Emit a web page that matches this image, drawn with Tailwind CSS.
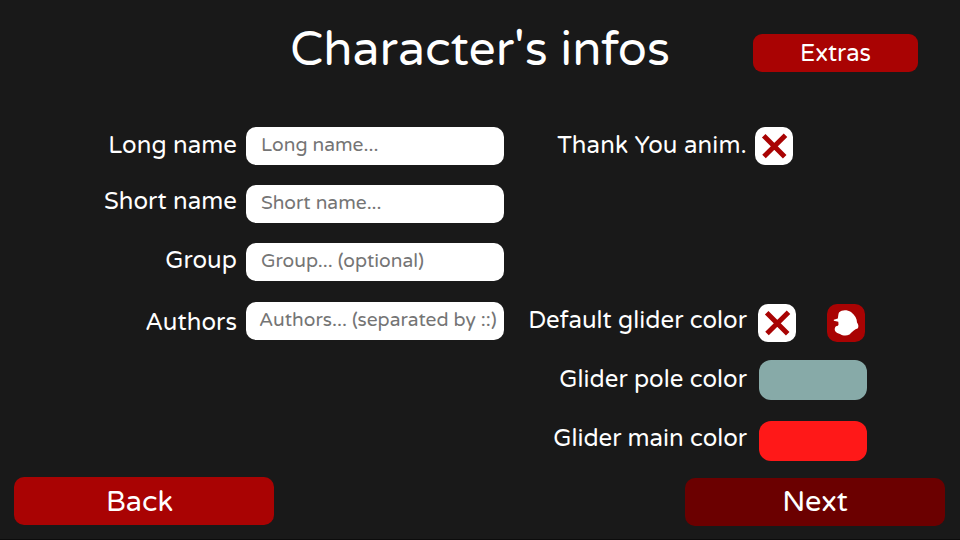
<!DOCTYPE html>
<html lang="en">
<head>
<meta charset="utf-8">
<title>Character's infos</title>
<script src="https://cdn.jsdelivr.net/npm/@tailwindcss/browser@4"></script>
</head>
<body class="bg-[#191919]">
<div class="w-[960px] h-[540px] overflow-hidden flex flex-col bg-[#191919] border-b border-[#0c0c0c] text-white text-[24px] font-['Varela_Round','Noto_Sans',sans-serif] whitespace-nowrap">
  <header class="h-[127px] shrink-0 flex pl-[290px] pt-[19px]">
    <h1 class="w-[463px] text-[48px] leading-[62px]">Character's infos</h1>
    <button class="mt-[15px] w-[165px] h-[38px] rounded-[9px] bg-[#a90303] pt-px text-[23.8px] leading-[38px]">Extras</button>
  </header>
  <main class="h-[350px] shrink-0 flex">
    <section class="w-[504px] flex flex-col gap-5">
      <label class="h-[38px] flex gap-[9px]"><span class="w-[237px] text-right leading-[38px] tracking-[0.08px]">Long name</span>
        <input placeholder="Long name..." class="w-[258px] h-[38px] rounded-[10px] bg-white pl-[15px] pb-[4px] text-[19.2px] placeholder:text-[#757575]"></label>
      <label class="h-[38px] flex gap-[9px]"><span class="w-[237px] text-right leading-[34px] tracking-[0.08px]">Short name</span>
        <input placeholder="Short name..." class="w-[258px] h-[38px] rounded-[10px] bg-white pl-[15px] pb-[4px] text-[19.2px] placeholder:text-[#757575]"></label>
      <label class="h-[38px] flex gap-[9px]"><span class="w-[237px] text-right leading-[36px] tracking-[0.08px]">Group</span>
        <input placeholder="Group... (optional)" class="w-[258px] h-[38px] rounded-[10px] bg-white pl-[15px] pb-[4px] text-[19.2px] placeholder:text-[#757575]"></label>
      <label class="mt-px h-[38px] flex gap-[9px]"><span class="w-[237px] text-right leading-[42px] tracking-[0.08px]">Authors</span>
        <input placeholder="Authors... (separated by ::)" class="w-[258px] h-[38px] rounded-[10px] bg-white pl-[13px] pb-[4px] text-[19.2px] placeholder:text-[#757575]"></label>
    </section>
    <section class="flex flex-col">
      <div class="h-[177px] flex gap-2"><span class="w-[243px] text-right leading-[38px] tracking-[0.13px]">Thank You anim.</span>
        <button class="size-[38px] rounded-[10px] bg-white" aria-label="Thank You anim."><svg viewBox="0 0 38 38" class="size-[38px]"><path d="M8.7 8.7 29.7 29.7M30.5 8.2 9 29.5" stroke="#a90303" stroke-width="5" fill="none"/></svg></button></div>
      <div class="h-[56px] flex"><span class="w-[243px] text-right leading-[34px] tracking-[0.05px]">Default glider color</span>
        <button class="ml-[11px] size-[38px] rounded-[10px] bg-white" aria-label="Default glider color"><svg viewBox="0 0 38 38" class="size-[38px]"><path d="M8.7 8.7 29.7 29.7M30.5 8.2 9 29.5" stroke="#a90303" stroke-width="5" fill="none"/></svg></button>
        <button class="ml-[31px] size-[38px] rounded-[10px] bg-[#a90303]" aria-label="Head"><svg viewBox="0 0 38 38" class="size-[38px]"><path d="M12 8.5C15 5.5 20 5.5 24 8C28 11 30 15 30 18.5C32 21 31.5 24 30.5 24.5C28 25 25 28 22.5 30.5C19 32.5 15.5 31.5 13 30C9 29 6.5 26.5 8.3 23C9.5 21.5 11.2 22.5 11.5 20.5L11.3 17.8L6.8 16.8L6.8 15.7L10.8 14.5C11.3 12 11.2 10 12 8.5Z" fill="#fff"/></svg></button></div>
      <div class="h-[61px] flex gap-3"><span class="w-[243px] text-right leading-[40px] tracking-[0.05px]">Glider pole color</span>
        <button class="w-[108px] h-[40px] rounded-[12px] bg-[#87aaa8]" aria-label="Glider pole color"></button></div>
      <div class="flex gap-3"><span class="w-[243px] text-right leading-[36px]">Glider main color</span>
        <button class="w-[108px] h-[40px] rounded-[12px] bg-[#ff1818]" aria-label="Glider main color"></button></div>
    </section>
  </main>
  <footer class="flex justify-between pl-[14px] pr-[15px] text-[28.8px]">
    <button class="w-[260px] h-[48px] rounded-[10px] bg-[#a90303] pt-px pr-[9px] leading-[48px]">Back</button>
    <button class="mt-px w-[260px] h-[48px] rounded-[10px] bg-[#6b0000] leading-[46px]">Next</button>
  </footer>
</div>
</body>
</html>
